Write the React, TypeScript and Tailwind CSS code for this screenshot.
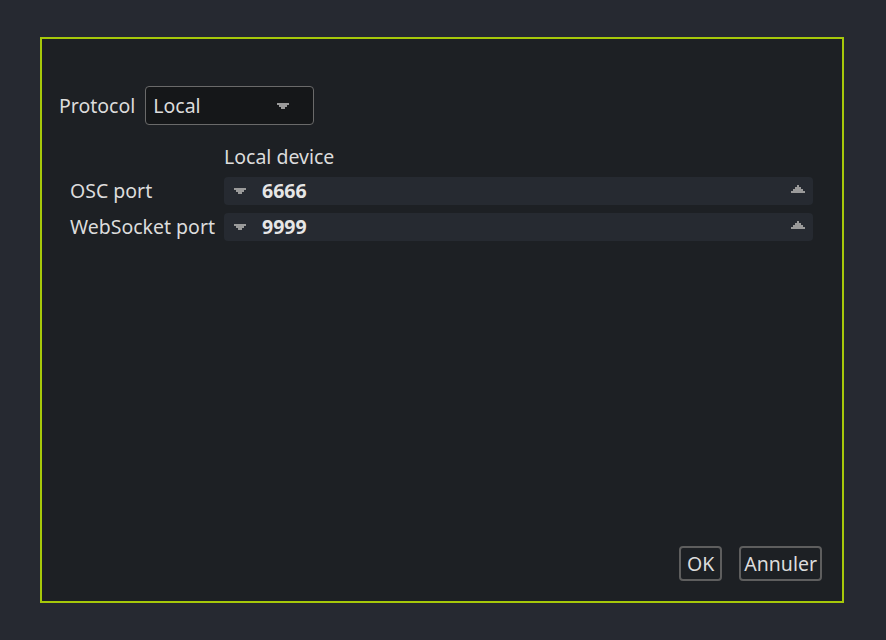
import React from "react";

function Down({ className = "" }: { className?: string }) {
  return (
    <svg width="12" height="6" viewBox="0 0 12 6" className={className} shapeRendering="crispEdges">
      <path d="M0 0H12V2H10V4H8V6H4V4H2V2H0Z" fill="#9a9a9a" />
    </svg>
  );
}
function Up({ className = "" }: { className?: string }) {
  return (
    <svg width="14" height="8" viewBox="0 0 14 8" className={className} shapeRendering="crispEdges">
      <path d="M6 0H8V2H10V4H12V6H14V8H0V6H2V4H4V2H6Z" fill="#9a9a9a" />
    </svg>
  );
}

function Spin({ value }: { value: string }) {
  return (
    <div className="h-[28px] rounded-[4px] bg-[#262a31] flex items-center pl-[10px] pr-[8px]">
      <Down />
      <span className="ml-[16px] font-bold text-[#e6e6e6]">{value}</span>
      <div className="flex-1" />
      <Up className="mb-[4px]" />
    </div>
  );
}

export default function App() {
  return (
    <div
      className="w-[886px] h-[640px] bg-[#262931] pt-[37px] pl-[40px] text-[19.5px] text-[#dcdcdc]"
      style={{ fontFamily: '"Noto Sans", "Open Sans", sans-serif' }}
    >
      <div className="w-[804px] h-[566px] border-2 border-[#a6c80a] bg-[#1d2024] flex flex-col px-[17px] pt-[47px] pb-[20px]">
        <div className="flex items-center">
          <span className="leading-none">Protocol</span>
          <div className="ml-[10px] w-[169px] h-[39px] rounded-[4px] border border-[#6a6a6a] bg-[#151719] flex items-center pl-[7px] pr-[24px]">
            <span>Local</span>
            <div className="flex-1" />
            <Down />
          </div>
        </div>
        <div className="mt-[19px] ml-[11px] mr-[12px] grid grid-cols-[154px_1fr] gap-y-[8px] items-center leading-[28px]">
          <div />
          <div className="h-[25px] flex items-center">Local device</div>
          <div>OSC port</div>
          <Spin value="6666" />
          <div>WebSocket port</div>
          <Spin value="9999" />
        </div>
        <div className="flex-1" />
        <div className="flex justify-end gap-[17px] pr-[3px]">
          <button className="h-[35px] px-[6px] rounded-[4px] border-2 border-[#5e5e5e] flex items-center">OK</button>
          <button className="h-[35px] px-[3px] rounded-[4px] border-2 border-[#5e5e5e] flex items-center">Annuler</button>
        </div>
      </div>
    </div>
  );
}
